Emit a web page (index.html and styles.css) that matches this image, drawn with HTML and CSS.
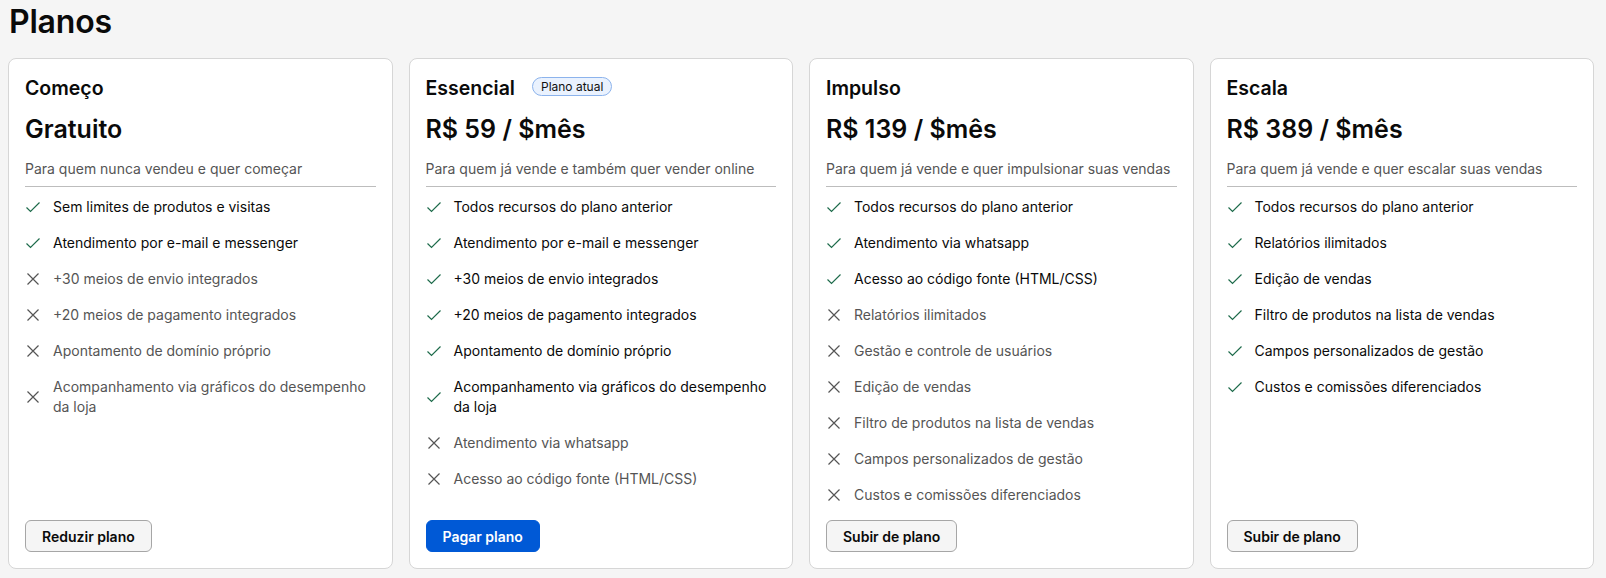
FILE: index.html
```html
<!DOCTYPE html>
<html lang="pt-BR">
<head>
<meta charset="utf-8">
<title>Planos</title>
<link rel="stylesheet" href="styles.css">
</head>
<body>
<div class="page">
  <h1 class="page-title">Planos</h1>
  <div class="plans">
    <section class="card">
      <div class="card-head"><h2 class="plan-name">Começo</h2></div>
      <div class="price">Gratuito</div>
      <p class="desc">Para quem nunca vendeu e quer começar</p>
      <ul class="features">
        <li class="yes"><svg class="ico" viewBox="0 0 16 16"><path d="M1.5 8.5l4 4L14.5 3.5"/></svg><span>Sem limites de produtos e visitas</span></li>
        <li class="yes"><svg class="ico" viewBox="0 0 16 16"><path d="M1.5 8.5l4 4L14.5 3.5"/></svg><span>Atendimento por e-mail e messenger</span></li>
        <li class="no"><svg class="ico" viewBox="0 0 16 16"><path d="M2.5 2.5l11 11M13.5 2.5l-11 11"/></svg><span>+30 meios de envio integrados</span></li>
        <li class="no"><svg class="ico" viewBox="0 0 16 16"><path d="M2.5 2.5l11 11M13.5 2.5l-11 11"/></svg><span>+20 meios de pagamento integrados</span></li>
        <li class="no"><svg class="ico" viewBox="0 0 16 16"><path d="M2.5 2.5l11 11M13.5 2.5l-11 11"/></svg><span>Apontamento de domínio próprio</span></li>
        <li class="no"><svg class="ico" viewBox="0 0 16 16"><path d="M2.5 2.5l11 11M13.5 2.5l-11 11"/></svg><span>Acompanhamento via gráficos do desempenho da loja</span></li>
      </ul>
      <div class="actions"><button class="btn btn-secondary">Reduzir plano</button></div>
    </section>

    <section class="card">
      <div class="card-head"><h2 class="plan-name">Essencial</h2><span class="badge">Plano atual</span></div>
      <div class="price">R$ 59 / $mês</div>
      <p class="desc">Para quem já vende e também quer vender online</p>
      <ul class="features">
        <li class="yes"><svg class="ico" viewBox="0 0 16 16"><path d="M1.5 8.5l4 4L14.5 3.5"/></svg><span>Todos recursos do plano anterior</span></li>
        <li class="yes"><svg class="ico" viewBox="0 0 16 16"><path d="M1.5 8.5l4 4L14.5 3.5"/></svg><span>Atendimento por e-mail e messenger</span></li>
        <li class="yes"><svg class="ico" viewBox="0 0 16 16"><path d="M1.5 8.5l4 4L14.5 3.5"/></svg><span>+30 meios de envio integrados</span></li>
        <li class="yes"><svg class="ico" viewBox="0 0 16 16"><path d="M1.5 8.5l4 4L14.5 3.5"/></svg><span>+20 meios de pagamento integrados</span></li>
        <li class="yes"><svg class="ico" viewBox="0 0 16 16"><path d="M1.5 8.5l4 4L14.5 3.5"/></svg><span>Apontamento de domínio próprio</span></li>
        <li class="yes"><svg class="ico" viewBox="0 0 16 16"><path d="M1.5 8.5l4 4L14.5 3.5"/></svg><span>Acompanhamento via gráficos do desempenho da loja</span></li>
        <li class="no"><svg class="ico" viewBox="0 0 16 16"><path d="M2.5 2.5l11 11M13.5 2.5l-11 11"/></svg><span>Atendimento via whatsapp</span></li>
        <li class="no"><svg class="ico" viewBox="0 0 16 16"><path d="M2.5 2.5l11 11M13.5 2.5l-11 11"/></svg><span>Acesso ao código fonte (HTML/CSS)</span></li>
      </ul>
      <div class="actions"><button class="btn btn-primary">Pagar plano</button></div>
    </section>

    <section class="card">
      <div class="card-head"><h2 class="plan-name">Impulso</h2></div>
      <div class="price">R$ 139 / $mês</div>
      <p class="desc">Para quem já vende e quer impulsionar suas vendas</p>
      <ul class="features">
        <li class="yes"><svg class="ico" viewBox="0 0 16 16"><path d="M1.5 8.5l4 4L14.5 3.5"/></svg><span>Todos recursos do plano anterior</span></li>
        <li class="yes"><svg class="ico" viewBox="0 0 16 16"><path d="M1.5 8.5l4 4L14.5 3.5"/></svg><span>Atendimento via whatsapp</span></li>
        <li class="yes"><svg class="ico" viewBox="0 0 16 16"><path d="M1.5 8.5l4 4L14.5 3.5"/></svg><span>Acesso ao código fonte (HTML/CSS)</span></li>
        <li class="no"><svg class="ico" viewBox="0 0 16 16"><path d="M2.5 2.5l11 11M13.5 2.5l-11 11"/></svg><span>Relatórios ilimitados</span></li>
        <li class="no"><svg class="ico" viewBox="0 0 16 16"><path d="M2.5 2.5l11 11M13.5 2.5l-11 11"/></svg><span>Gestão e controle de usuários</span></li>
        <li class="no"><svg class="ico" viewBox="0 0 16 16"><path d="M2.5 2.5l11 11M13.5 2.5l-11 11"/></svg><span>Edição de vendas</span></li>
        <li class="no"><svg class="ico" viewBox="0 0 16 16"><path d="M2.5 2.5l11 11M13.5 2.5l-11 11"/></svg><span>Filtro de produtos na lista de vendas</span></li>
        <li class="no"><svg class="ico" viewBox="0 0 16 16"><path d="M2.5 2.5l11 11M13.5 2.5l-11 11"/></svg><span>Campos personalizados de gestão</span></li>
        <li class="no"><svg class="ico" viewBox="0 0 16 16"><path d="M2.5 2.5l11 11M13.5 2.5l-11 11"/></svg><span>Custos e comissões diferenciados</span></li>
      </ul>
      <div class="actions"><button class="btn btn-secondary">Subir de plano</button></div>
    </section>

    <section class="card">
      <div class="card-head"><h2 class="plan-name">Escala</h2></div>
      <div class="price">R$ 389 / $mês</div>
      <p class="desc">Para quem já vende e quer escalar suas vendas</p>
      <ul class="features">
        <li class="yes"><svg class="ico" viewBox="0 0 16 16"><path d="M1.5 8.5l4 4L14.5 3.5"/></svg><span>Todos recursos do plano anterior</span></li>
        <li class="yes"><svg class="ico" viewBox="0 0 16 16"><path d="M1.5 8.5l4 4L14.5 3.5"/></svg><span>Relatórios ilimitados</span></li>
        <li class="yes"><svg class="ico" viewBox="0 0 16 16"><path d="M1.5 8.5l4 4L14.5 3.5"/></svg><span>Edição de vendas</span></li>
        <li class="yes"><svg class="ico" viewBox="0 0 16 16"><path d="M1.5 8.5l4 4L14.5 3.5"/></svg><span>Filtro de produtos na lista de vendas</span></li>
        <li class="yes"><svg class="ico" viewBox="0 0 16 16"><path d="M1.5 8.5l4 4L14.5 3.5"/></svg><span>Campos personalizados de gestão</span></li>
        <li class="yes"><svg class="ico" viewBox="0 0 16 16"><path d="M1.5 8.5l4 4L14.5 3.5"/></svg><span>Custos e comissões diferenciados</span></li>
      </ul>
      <div class="actions"><button class="btn btn-secondary">Subir de plano</button></div>
    </section>
  </div>
</div>
</body>
</html>
```

FILE: styles.css
```css
* { box-sizing: border-box; }

body {
  margin: 0;
  background: #f5f5f5;
  font-family: "Inter", "Noto Sans", sans-serif;
  color: #0a0a0a;
}

.page {
  padding: 3px 12px 9px 8px;
}

.page-title {
  margin: 0 0 17px 1px;
  font-size: 32px;
  line-height: 38px;
  font-weight: 600;
  letter-spacing: -0.2px;
}

.plans {
  display: grid;
  grid-template-columns: repeat(4, 1fr);
  gap: 16px;
}

.card {
  display: flex;
  flex-direction: column;
  background: #fff;
  border: 1px solid #d6d6d6;
  border-radius: 8px;
  padding: 17px 16px 16px;
}

.card-head {
  display: flex;
  align-items: center;
  gap: 17px;
  height: 24px;
}

.plan-name {
  margin: 0;
  font-size: 19.5px;
  line-height: 24px;
  font-weight: 600;
}

.badge {
  display: inline-flex;
  align-items: center;
  height: 19px;
  padding: 0 8px;
  border: 1px solid #8cb3ec;
  background: #eaf2fe;
  border-radius: 10px;
  font-size: 12px;
  color: #111;
  margin-top: -3px;
}

.price {
  margin-top: 13px;
  font-size: 25px;
  line-height: 32px;
  font-weight: 600;
}

.desc {
  margin: 14px 0 0;
  padding-bottom: 7px;
  border-bottom: 1px solid #bdbdbd;
  font-size: 14px;
  line-height: 20px;
  color: #555;
}

.features {
  list-style: none;
  margin: 10px 0 0;
  padding: 0;
  display: flex;
  flex-direction: column;
  gap: 16px;
}

.features li {
  display: flex;
  align-items: center;
  gap: 12px;
  font-size: 14px;
  line-height: 20px;
}

.ico {
  flex: none;
  width: 16px;
  height: 16px;
  fill: none;
  stroke-width: 1.2;
}

.yes { color: #0a0a0a; }
.yes .ico { stroke: #1e6b4b; }
.no { color: #555; }
.no .ico { stroke: #555; }

.actions {
  margin-top: auto;
  padding-top: 15px;
}

.btn {
  height: 32px;
  padding: 0 16px;
  border-radius: 6px;
  font-family: inherit;
  font-size: 14px;
  font-weight: 600;
  cursor: pointer;
}

.btn-primary {
  background: #0059d6;
  border: 1px solid #0059d6;
  color: #fff;
}

.btn-secondary {
  background: #f5f5f5;
  border: 1px solid #a6a6a6;
  color: #0a0a0a;
}
```
